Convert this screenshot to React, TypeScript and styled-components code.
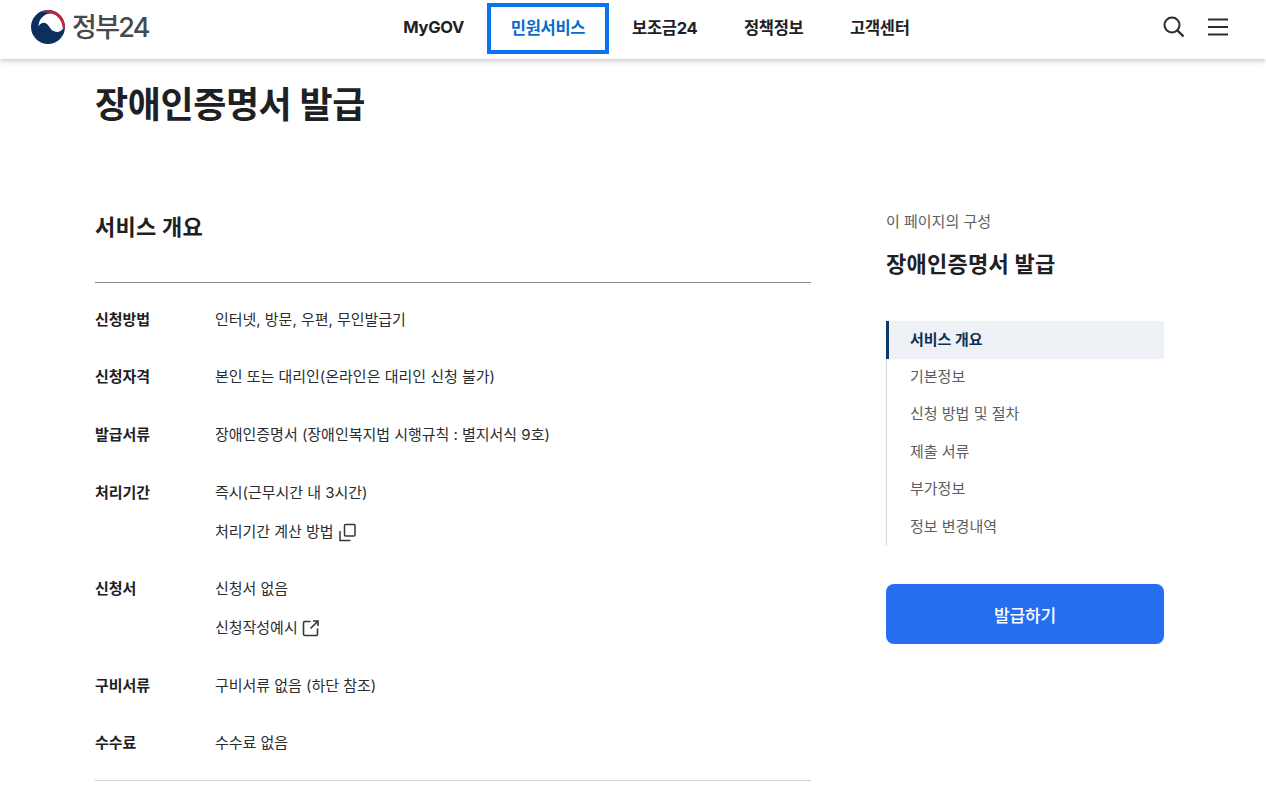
import React from "react";
import styled, { createGlobalStyle } from "styled-components";

const GlobalStyle = createGlobalStyle`
  html, body { margin: 0; padding: 0; background: #fff; overflow: hidden; }
  body {
    font-family: "Inter", "Noto Sans CJK KR", sans-serif;
    color: #1e2124;
    height: 798px;
  }
  a { color: inherit; text-decoration: none; }
  ul, dl, dd, h1, h2, p { margin: 0; padding: 0; }
`;

const infoRows = [
  { label: "신청방법", lines: [{ text: "인터넷, 방문, 우편, 무인발급기" }] },
  { label: "신청자격", lines: [{ text: "본인 또는 대리인(온라인은 대리인 신청 불가)" }] },
  { label: "발급서류", lines: [{ text: "장애인증명서 (장애인복지법 시행규칙 : 별지서식 9호)" }] },
  {
    label: "처리기간",
    lines: [{ text: "즉시(근무시간 내 3시간)" }, { text: "처리기간 계산 방법", icon: "copy" }],
  },
  {
    label: "신청서",
    lines: [{ text: "신청서 없음" }, { text: "신청작성예시", icon: "external" }],
  },
  { label: "구비서류", lines: [{ text: "구비서류 없음 (하단 참조)" }] },
  { label: "수수료", lines: [{ text: "수수료 없음" }] },
];

const navItems = ["MyGOV", "민원서비스", "보조금24", "정책정보", "고객센터"];
const tocItems = ["서비스 개요", "기본정보", "신청 방법 및 절차", "제출 서류", "부가정보", "정보 변경내역"];

const Header = styled.header`
  height: 59px;
  background: #fff;
  box-shadow: 0 2px 5px rgba(0, 0, 0, 0.22);
  display: grid;
  grid-template-columns: 380px 1fr 110px;
  align-items: center;
  position: relative;
`;
const Logo = styled.a`
  display: flex;
  align-items: center;
  gap: 7px;
  padding: 0 0 5px 31px;
`;
const LogoText = styled.span`
  font-size: 27px;
  font-weight: 500;
  letter-spacing: -1.7px;
  color: #47494d;
  line-height: 1;
`;
const Nav = styled.nav`
  display: flex;
  align-items: center;
  height: 59px;
  padding-bottom: 5px;
  box-sizing: border-box;
`;
const NavItem = styled.a<{ $focused?: boolean }>`
  display: flex;
  align-items: center;
  justify-content: center;
  box-sizing: border-box;
  height: 50px;
  padding: 0 23.3px;
  font-size: 16.5px;
  font-weight: 700;
  letter-spacing: -0.3px;
  color: ${(p) => (p.$focused ? "#0b6bcb" : "#1e2124")};
  ${(p) =>
    p.$focused &&
    "border: 4px solid #0a74f0; padding: 0 19.5px 2px; height: 51px; margin-top: 2px;"}
`;
const Tools = styled.div`
  display: flex;
  align-items: center;
  gap: 20px;
  padding: 0 0 5px 6px;
`;
const IconBtn = styled.button`
  display: flex;
  border: 0;
  padding: 0;
  background: none;
  color: #2a2d30;
`;

const Page = styled.main`
  display: grid;
  grid-template-columns: 716px 278px;
  column-gap: 75px;
  padding: 0 0 0 95px;
`;
const Title = styled.h1`
  grid-column: 1 / -1;
  font-size: 36px;
  font-weight: 700;
  letter-spacing: -0.4px;
  line-height: 48px;
  padding-top: 22px;
  height: 124px;
`;
const Overview = styled.section`
  padding-top: 6px;
`;
const SectionTitle = styled.h2`
  font-size: 22px;
  font-weight: 700;
  line-height: 32px;
  letter-spacing: 0.25px;
  padding-bottom: 39px;
  border-bottom: 1px solid #8a8d91;
`;
const InfoList = styled.dl`
  padding: 8px 0 7px;
  border-bottom: 1px solid #cdd1d5;
`;
const InfoRow = styled.div`
  display: grid;
  grid-template-columns: 120px 1fr;
  padding: 9.6px 0;
`;
const InfoLabel = styled.dt`
  font-size: 15px;
  font-weight: 700;
  line-height: 38px;
  letter-spacing: -0.05px;
`;
const InfoLine = styled.dd`
  display: flex;
  align-items: center;
  gap: 4px;
  font-size: 15px;
  line-height: 38.6px;
  letter-spacing: -0.02px;
  color: #2a2d30;
`;
const Aside = styled.aside`
  padding-top: 6px;
`;
const AsideCaption = styled.p`
  font-size: 15px;
  line-height: 22px;
  color: #5a5e63;
  letter-spacing: 0;
`;
const AsideTitle = styled.h2`
  font-size: 22px;
  font-weight: 700;
  line-height: 32px;
  letter-spacing: 0.25px;
  margin-top: 15px;
`;
const Toc = styled.ul`
  list-style: none;
  margin-top: 41px;
  border-left: 1px solid #d6d9dc;
`;
const TocItem = styled.li<{ $active?: boolean }>`
  height: 37.5px;
  line-height: 36px;
  box-sizing: border-box;
  padding-left: 23px;
  font-size: 15px;
  letter-spacing: 0;
  color: #5a5e63;
  ${(p) =>
    p.$active &&
    "line-height: 37px; margin-left: -1px; padding-left: 21px; border-left: 3px solid #0b3b69; background: #eef2f7; color: #0f2f52; font-weight: 700;"}
`;
const IssueButton = styled.button`
  display: block;
  width: 100%;
  height: 60px;
  margin-top: 38px;
  border: 0;
  border-radius: 8px;
  background: #256ef0;
  color: #fff;
  font: 500 17px "Inter", "Noto Sans CJK KR", sans-serif;
  letter-spacing: -0.2px;
`;

const LogoMark = () => (
  <svg width="34" height="34" viewBox="0 0 34 34">
    <circle cx="17" cy="17" r="17" fill="#0d2f5e" />
    <path
      d="M7.5 17C7.5 8 14 3.5 19.5 3.5C26 3.5 32 10 32 18.5C30 22 25.5 23 21.5 20.5C18.5 18.5 17.5 13 12.5 12.7C9.5 12.7 8 15 7.5 17Z"
      fill="#fff"
    />
    <path
      d="M9 2C14-.5 21-.8 26.5 3C31.5 6.5 34 12 34 18C33 20 32.3 19.5 32 18.5C31 10 26 4.5 19.5 3C15.5 2 12 2 9 2Z"
      fill="#c8243e"
    />
  </svg>
);

const SearchIcon = () => (
  <svg width="24" height="24" viewBox="0 0 24 24" fill="none" stroke="currentColor" strokeWidth="2">
    <circle cx="10" cy="10" r="7.5" />
    <path d="m15.5 15.5 6 6" strokeWidth="2.4" />
  </svg>
);

const MenuIcon = () => (
  <svg width="24" height="24" viewBox="0 0 24 24" fill="none" stroke="currentColor" strokeWidth="2">
    <path d="M2 4.5h20M2 12h20M2 19.5h20" />
  </svg>
);

const CopyIcon = () => (
  <svg width="20" height="20" viewBox="0 0 20 20" fill="none" stroke="#33363a" strokeWidth="1.5">
    <rect x="6.5" y="2.5" width="10.5" height="11.5" rx="1" />
    <path d="M2 9v9.5h10.5" />
  </svg>
);

const ExternalIcon = () => (
  <svg width="18" height="18" viewBox="0 0 18 18" fill="none" stroke="#33363a" strokeWidth="1.6">
    <path d="M8.5 2.5H3A1.5 1.5 0 0 0 1.5 4v11A1.5 1.5 0 0 0 3 16.5h11a1.5 1.5 0 0 0 1.5-1.5V9.500" />
    <path d="M11 2h5V7M16 2 8.500 9.500" />
  </svg>
);

export default function App() {
  return (
    <>
      <GlobalStyle />
      <Header>
        <Logo href="#">
          <LogoMark />
          <LogoText>정부24</LogoText>
        </Logo>
        <Nav>
          {navItems.map((item) => (
            <NavItem key={item} href="#" $focused={item === "민원서비스"}>
              {item}
            </NavItem>
          ))}
        </Nav>
        <Tools>
          <IconBtn aria-label="검색">
            <SearchIcon />
          </IconBtn>
          <IconBtn aria-label="메뉴">
            <MenuIcon />
          </IconBtn>
        </Tools>
      </Header>
      <Page>
        <Title>장애인증명서 발급</Title>
        <Overview>
          <SectionTitle>서비스 개요</SectionTitle>
          <InfoList>
            {infoRows.map((row) => (
              <InfoRow key={row.label}>
                <InfoLabel>{row.label}</InfoLabel>
                <div>
                  {row.lines.map((line) => (
                    <InfoLine key={line.text}>
                      {line.text}
                      {line.icon === "copy" && <CopyIcon />}
                      {line.icon === "external" && <ExternalIcon />}
                    </InfoLine>
                  ))}
                </div>
              </InfoRow>
            ))}
          </InfoList>
        </Overview>
        <Aside>
          <AsideCaption>이 페이지의 구성</AsideCaption>
          <AsideTitle>장애인증명서 발급</AsideTitle>
          <Toc>
            {tocItems.map((item, i) => (
              <TocItem key={item} $active={i === 0}>
                {item}
              </TocItem>
            ))}
          </Toc>
          <IssueButton>발급하기</IssueButton>
        </Aside>
      </Page>
    </>
  );
}
